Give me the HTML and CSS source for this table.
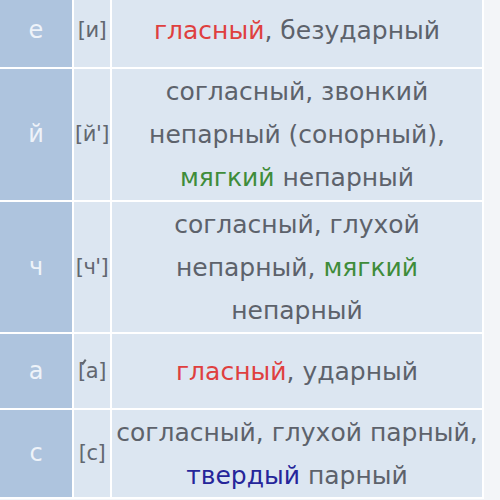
FILE: index.html
```html
<!DOCTYPE html>
<html lang="ru">
<head>
<meta charset="utf-8">
<link rel="stylesheet" href="styles.css">
</head>
<body>
<div class="table">
  <div class="cell letter">е</div>
  <div class="cell tr">[и]</div>
  <div class="cell desc"><span class="red">гласный</span>, безударный</div>

  <div class="cell letter">й</div>
  <div class="cell tr">[й']</div>
  <div class="cell desc">согласный, звонкий<br>непарный (сонорный),<br><span class="green">мягкий</span> непарный</div>

  <div class="cell letter">ч</div>
  <div class="cell tr">[ч']</div>
  <div class="cell desc">согласный, глухой<br>непарный, <span class="green">мягкий</span><br>непарный</div>

  <div class="cell letter">а</div>
  <div class="cell tr"><span class="br">[</span>а]</div>
  <div class="cell desc"><span class="red">гласный</span>, ударный</div>

  <div class="cell letter">с</div>
  <div class="cell tr">[с]</div>
  <div class="cell desc">согласный, глухой парный,<br><span class="blue">твердый</span> парный</div>
</div>
</body>
</html>
```
FILE: styles.css
```css
html, body {
  margin: 0;
  padding: 0;
  background: #f3f5f8;
  overflow: hidden;
}
.table {
  display: grid;
  grid-template-columns: 72px 36px 370px;
  grid-template-rows: 73px 131px 130px 74px 87px;
  gap: 2px;
  width: 482px;
  padding: 0 2px 2px 0;
  margin-top: -6px;
  background: #ffffff;
  font-family: "DejaVu Sans", sans-serif;
  font-size: 25px;
  line-height: 43px;
  color: #5d626b;
}
.cell {
  display: flex;
  align-items: center;
  justify-content: center;
  text-align: center;
  background: #dce6f1;
}
.letter {
  background: #aec4de;
  color: #eef3f9;
  font-size: 24px;
}
.tr {
  color: #626770;
  font-size: 21px;
  letter-spacing: -0.5px;
}
.br {
  position: relative;
}
.br::before {
  content: "";
  position: absolute;
  left: 5px;
  top: 9px;
  width: 1.5px;
  height: 6px;
  background: #626770;
  transform: rotate(35deg);
}
.desc {
  display: block;
  align-content: center;
}
.red { color: #df3f3f; }
.green { color: #3f8c3a; }
.blue { color: #25259a; }
```
